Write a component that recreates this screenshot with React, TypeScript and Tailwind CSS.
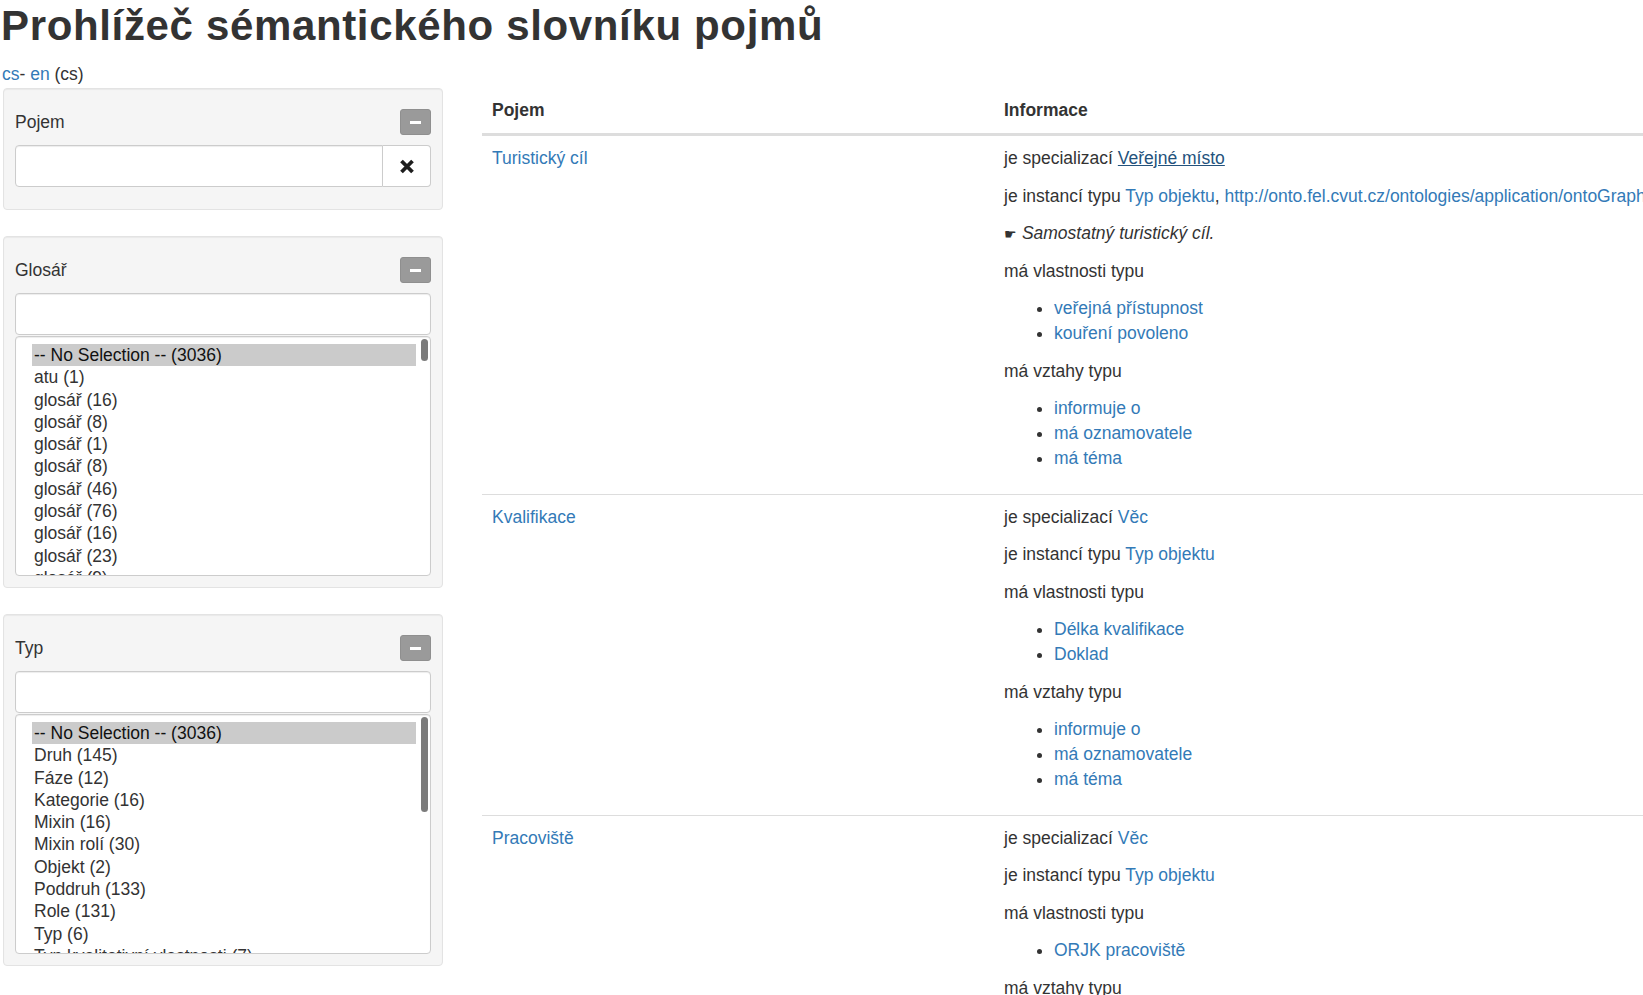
import React from "react";

const rels = ["informuje o", "má oznamovatele", "má téma"];

const rows = [
  {
    name: "Turistický cíl",
    spec: "Veřejné místo",
    specActive: true,
    inst: ["Typ objektu", "http://onto.fel.cvut.cz/ontologies/application/ontoGrapher/typ-objektu"],
    note: "Samostatný turistický cíl.",
    props: ["veřejná přístupnost", "kouření povoleno"],
    rels,
  },
  {
    name: "Kvalifikace",
    spec: "Věc",
    specActive: false,
    inst: ["Typ objektu"],
    note: "",
    props: ["Délka kvalifikace", "Doklad"],
    rels,
  },
  {
    name: "Pracoviště",
    spec: "Věc",
    specActive: false,
    inst: ["Typ objektu"],
    note: "",
    props: ["ORJK pracoviště"],
    rels,
  },
];

const glosar = [
  "-- No Selection -- (3036)",
  "atu (1)",
  "glosář (16)",
  "glosář (8)",
  "glosář (1)",
  "glosář (8)",
  "glosář (46)",
  "glosář (76)",
  "glosář (16)",
  "glosář (23)",
  "glosář (9)",
  "glosář (4)",
];

const typy = [
  "-- No Selection -- (3036)",
  "Druh (145)",
  "Fáze (12)",
  "Kategorie (16)",
  "Mixin (16)",
  "Mixin rolí (30)",
  "Objekt (2)",
  "Poddruh (133)",
  "Role (131)",
  "Typ (6)",
  "Typ kvalitativní vlastnosti (7)",
  "Vlastnost (40)",
];

const MinusButton = () => (
  <button className="flex h-[26px] w-[31px] items-center justify-center rounded-[3px] border border-[#8f8f8f] bg-[#9a9a9a]">
    <span className="block h-[3px] w-[11px] bg-white" />
  </button>
);

const PanelHead = ({ title }: { title: string }) => (
  <div className="flex h-[26px] items-center justify-between">
    <span>{title}</span>
    <MinusButton />
  </div>
);

const ListBox = ({ items, thumb }: { items: string[]; thumb: string }) => (
  <div className="relative mt-px h-[240px] overflow-hidden rounded-[4px] border border-[#ccc] bg-white pl-[16px] pr-[14px] pt-[7px] shadow-[inset_0_1px_1px_rgba(0,0,0,0.075)]">
    {items.map((it, i) => (
      <div
        key={i}
        className={
          i === 0
            ? "whitespace-nowrap bg-[#cbcbcb] pl-[2px] leading-[22.3px] text-[#111]"
            : "whitespace-nowrap pl-[2px] leading-[22.3px] text-[#333]"
        }
      >
        {it}
      </div>
    ))}
    <div className={"absolute right-[2px] top-[2px] w-[7px] rounded-full bg-[#7b7b7b] " + thumb} />
  </div>
);

const TextInput = () => (
  <div className="mt-[10px] h-[42px] rounded-[4px] border border-[#ccc] bg-white shadow-[inset_0_1px_1px_rgba(0,0,0,0.075)]" />
);

const Well = ({ children, className }: { children: React.ReactNode; className: string }) => (
  <div
    className={
      "rounded-[4px] border border-[#e3e3e3] bg-[#f5f5f5] pl-[11px] pr-[11px] pt-[20px] shadow-[inset_0_1px_1px_rgba(0,0,0,0.05)] " +
      className
    }
  >
    {children}
  </div>
);

const Sidebar = () => (
  <div className="ml-px w-[440px] shrink-0">
    <Well className="mb-[26px] pb-[22px]">
      <PanelHead title="Pojem" />
      <div className="mt-[10px] flex h-[42px]">
        <div className="flex-1 rounded-l-[4px] border border-[#ccc] bg-white shadow-[inset_0_1px_1px_rgba(0,0,0,0.075)]" />
        <div className="flex w-[48px] items-center justify-center rounded-r-[4px] border border-l-0 border-[#ccc] bg-white">
          <svg width="16" height="15" viewBox="0 0 16 15">
            <path d="M2.5 2 L13.5 13 M13.5 2 L2.5 13" stroke="#1e1e1e" strokeWidth="3.8" strokeLinecap="butt" fill="none" />
          </svg>
        </div>
      </div>
    </Well>
    <Well className="mb-[26px] pb-[11px]">
      <PanelHead title="Glosář" />
      <TextInput />
      <ListBox items={glosar} thumb="h-[22px]" />
    </Well>
    <Well className="pb-[11px]">
      <PanelHead title="Typ" />
      <TextInput />
      <ListBox items={typy} thumb="h-[95px]" />
    </Well>
  </div>
);

const Link = ({ children }: { children: React.ReactNode }) => <a className="text-[#337ab7]">{children}</a>;

const InfoCell = ({ r }: { r: (typeof rows)[number] }) => (
  <div className="p-[10px]">
    <p className="mb-[12.5px] whitespace-nowrap">
      je specializací{" "}
      {r.specActive ? <a className="text-[#23527c] underline">{r.spec}</a> : <Link>{r.spec}</Link>}
    </p>
    <p className="mb-[12.5px] whitespace-nowrap">
      je instancí typu{" "}
      {r.inst.map((t, i) => (
        <React.Fragment key={t}>
          {i > 0 && ", "}
          <Link>{t}</Link>
        </React.Fragment>
      ))}
    </p>
    {r.note && (
      <p className="mb-[12.5px] h-[25px] whitespace-nowrap italic">
        <span className="text-[14px] not-italic leading-none">☛</span> {r.note}
      </p>
    )}
    <p className="mb-[12.5px] whitespace-nowrap">má vlastnosti typu</p>
    <ul className="mb-[12.5px] list-disc pl-[50px]">
      {r.props.map((p) => (
        <li key={p} className="whitespace-nowrap">
          <Link>{p}</Link>
        </li>
      ))}
    </ul>
    <p className="mb-[12.5px] whitespace-nowrap">má vztahy typu</p>
    <ul className="mb-[12.5px] list-disc pl-[50px]">
      {r.rels.map((p) => (
        <li key={p} className="whitespace-nowrap">
          <Link>{p}</Link>
        </li>
      ))}
    </ul>
  </div>
);

const Table = () => (
  <div className="ml-[39px] min-w-0 flex-1">
    <div className="grid grid-cols-[512px_1fr] border-b-2 border-[#ddd] font-bold">
      <div className="p-[10px]">Pojem</div>
      <div className="p-[10px]">Informace</div>
    </div>
    {rows.map((r) => (
      <div key={r.name} className="grid grid-cols-[512px_1fr] border-t border-[#ddd]">
        <div className="p-[10px]">
          <Link>{r.name}</Link>
        </div>
        <InfoCell r={r} />
      </div>
    ))}
  </div>
);

export default function App() {
  return (
    <div className="h-[995px] w-full overflow-hidden bg-white font-['Liberation_Sans',Arial,sans-serif] text-[17.5px] leading-[25px] text-[#333]">
      <h1 className="mb-[13.5px] whitespace-nowrap pl-[1px] pt-[4px] text-[42px] font-bold leading-[44px] tracking-[0.65px] text-[#333]">
        Prohlížeč sémantického slovníku pojmů
      </h1>
      <div className="pl-[2px]">
        <Link>cs</Link>- <Link>en</Link> (cs)
      </div>
      <div className="mt-[1.5px] flex items-start pl-[2px]">
        <Sidebar />
        <Table />
      </div>
    </div>
  );
}
